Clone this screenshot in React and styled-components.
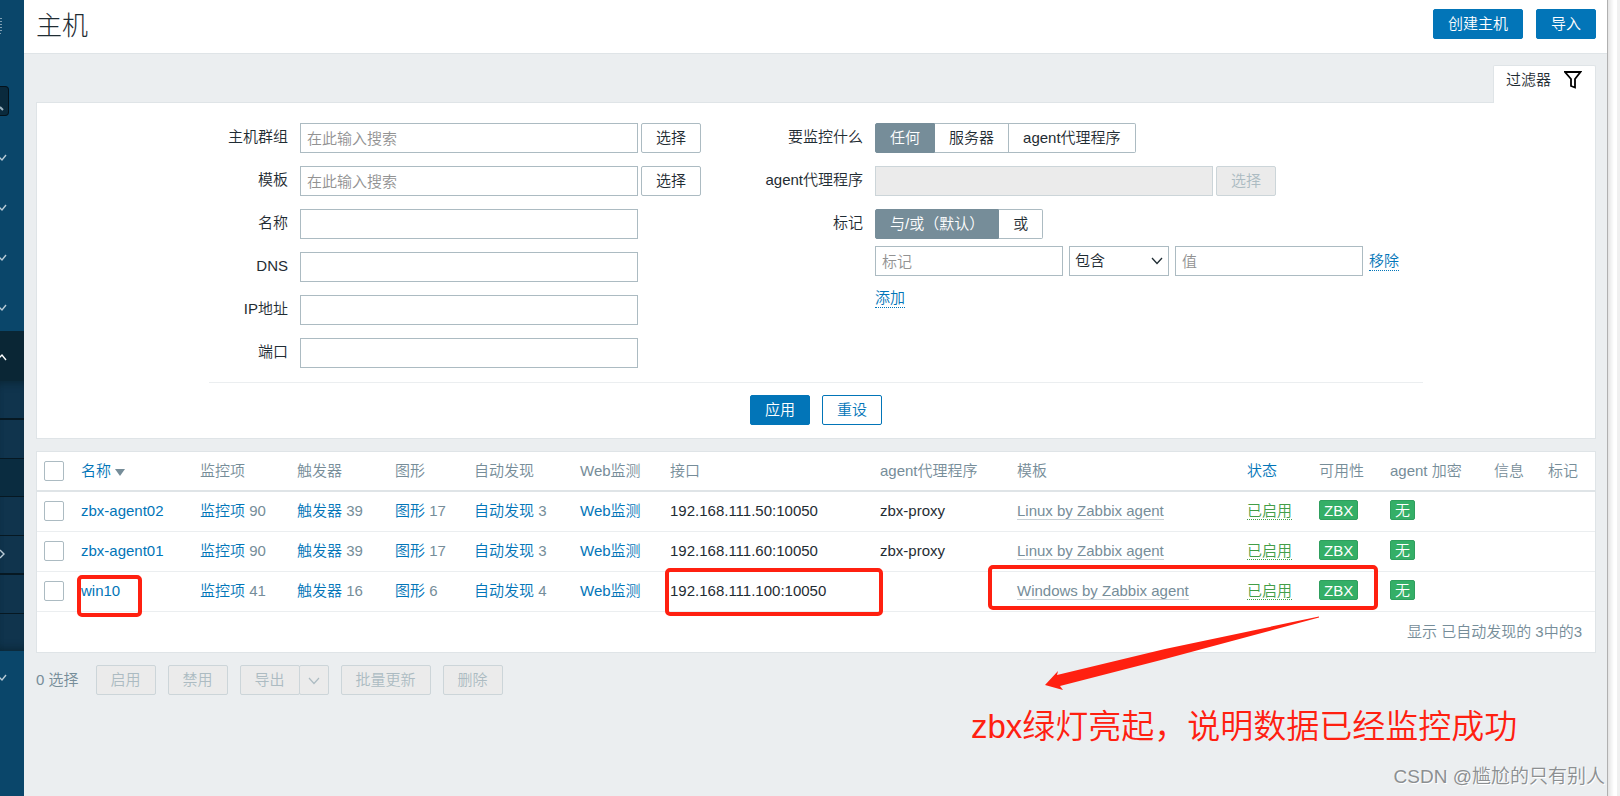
import styled, { createGlobalStyle } from "styled-components";

const GlobalStyle = createGlobalStyle`
  * {
    box-sizing: border-box;
  }
  body {
    margin: 0;
    background: #ebeef0;
    color: #1f2c33;
    font-family: "Liberation Sans", "Noto Sans CJK SC", sans-serif;
    font-size: 15px;
    font-weight: 350;
    line-height: 20px;
  }
  input, select, button {
    font: inherit;
    color: inherit;
    margin: 0;
  }
  a {
    color: #0275b8;
    text-decoration: none;
  }
`;

const hosts = [
  { name: "zbx-agent02", items: 90, triggers: 39, graphs: 17, discovery: 3, iface: "192.168.111.50:10050", proxy: "zbx-proxy", template: "Linux by Zabbix agent" },
  { name: "zbx-agent01", items: 90, triggers: 39, graphs: 17, discovery: 3, iface: "192.168.111.60:10050", proxy: "zbx-proxy", template: "Linux by Zabbix agent" },
  { name: "win10", items: 41, triggers: 16, graphs: 6, discovery: 4, iface: "192.168.111.100:10050", proxy: "", template: "Windows by Zabbix agent" },
];

const columns = [37, 119, 97, 98, 79, 106, 90, 210, 137, 230, 72, 71, 104, 54, 54];

const Chevron = ({ dir = "down" }) => {
  const paths = {
    down: "M-3 5 L2 10 L6 5",
    up: "M-3 10 L2 5 L6 10",
    right: "M0 2 L4 6 L0 10",
  };
  return (
    <svg width="8" height="12" viewBox="0 0 8 12" fill="none" stroke="currentColor" strokeWidth="1.4">
      <path d={paths[dir]} />
    </svg>
  );
};

const Radios = ({ name, label, options }) => (
  <RadioList role="radiogroup" aria-label={label}>
    {options.map((text, i) => (
      <label key={text}>
        <input type="radio" name={name} defaultChecked={i === 0} />
        <span>{text}</span>
      </label>
    ))}
  </RadioList>
);

const App = () => {
  return (
    <Page>
      <GlobalStyle />
      <Sidebar aria-label="menu">
        <SideTop>
          <svg width="3" height="16" viewBox="0 0 3 16" fill="none" stroke="#7f9fb3" strokeWidth="1">
            <path d="M0 .5H2M0 3.5H2M0 6.5H2M0 9.5H2M0 12.5H2M0 15.5H1" />
          </svg>
        </SideTop>
        <SideSearch>
          <svg width="4" height="5" viewBox="0 0 4 5" stroke="#9fb5c2" strokeWidth="2">
            <path d="M0 1 L3 4" />
          </svg>
        </SideSearch>
        <SideItem><Chevron /></SideItem>
        <SideItem><Chevron /></SideItem>
        <SideItem><Chevron /></SideItem>
        <SideItem><Chevron /></SideItem>
        <SideItem $open><Chevron dir="up" /></SideItem>
        <SubMenu>
          <SubItem $thick />
          <SubItem />
          <SubItem $active />
          <SubItem />
          <SubItem $thick><Chevron dir="right" /></SubItem>
          <SubItem />
          <SubItem $last />
        </SubMenu>
        <SideItem><Chevron /></SideItem>
      </Sidebar>

      <Main>
        <Header>
          <h1>主机</h1>
          <Button $primary type="button">创建主机</Button>
          <Button $primary type="button">导入</Button>
        </Header>

        <Content>
          <FilterTab type="button">
            过滤器
            <svg width="18" height="18" viewBox="0 0 18 18" fill="none" stroke="#000" strokeWidth="1.8">
              <path d="M1 1H16.5L11 8V16.5L7 15V8Z" />
            </svg>
          </FilterTab>

          <Filter>
            <FilterForm>
              <Column>
                <Row>
                  <Label htmlFor="groups" $width={79}>主机群组</Label>
                  <Input id="groups" placeholder="在此输入搜索" />
                  <Button type="button">选择</Button>
                </Row>
                <Row>
                  <Label htmlFor="templates" $width={79}>模板</Label>
                  <Input id="templates" placeholder="在此输入搜索" />
                  <Button type="button">选择</Button>
                </Row>
                <Row>
                  <Label htmlFor="name" $width={79}>名称</Label>
                  <Input id="name" />
                </Row>
                <Row>
                  <Label htmlFor="dns" $width={79}>DNS</Label>
                  <Input id="dns" />
                </Row>
                <Row>
                  <Label htmlFor="ip" $width={79}>IP地址</Label>
                  <Input id="ip" />
                </Row>
                <Row>
                  <Label htmlFor="port" $width={79}>端口</Label>
                  <Input id="port" />
                </Row>
              </Column>

              <Column>
                <Row>
                  <Label as="span" $width={100}>要监控什么</Label>
                  <Radios name="monitored" label="要监控什么" options={["任何", "服务器", "agent代理程序"]} />
                </Row>
                <Row>
                  <Label htmlFor="proxy" $width={100}>agent代理程序</Label>
                  <Input id="proxy" disabled />
                  <Button type="button" disabled>选择</Button>
                </Row>
                <Row>
                  <Label as="span" $width={100}>标记</Label>
                  <TagFields>
                    <Radios name="evaltype" label="标记" options={["与/或（默认）", "或"]} />
                    <TagRow>
                      <Input $width={188} placeholder="标记" aria-label="标记" />
                      <SelectBox>
                        <select aria-label="运算符">
                          <option>包含</option>
                        </select>
                        <svg width="12" height="8" viewBox="0 0 12 8" fill="none" stroke="#1f2c33" strokeWidth="1.3">
                          <path d="M1 1 L6 6.500 L11 1" />
                        </svg>
                      </SelectBox>
                      <Input $width={188} placeholder="值" aria-label="值" />
                      <DottedLink href="#remove">移除</DottedLink>
                    </TagRow>
                    <TagRow>
                      <DottedLink href="#add">添加</DottedLink>
                    </TagRow>
                  </TagFields>
                </Row>
              </Column>
            </FilterForm>
            <FilterFooter>
              <Button $primary type="button">应用</Button>
              <Button $outline type="button">重设</Button>
            </FilterFooter>
          </Filter>

          <TableBox>
            <Table>
              <colgroup>
                {columns.map((w, i) => (
                  <col key={i} width={w} />
                ))}
              </colgroup>
              <thead>
                <tr>
                  <th><Checkbox aria-label="全选" /></th>
                  <th><a href="#name">名称<SortArrow /></a></th>
                  <th>监控项</th>
                  <th>触发器</th>
                  <th>图形</th>
                  <th>自动发现</th>
                  <th>Web监测</th>
                  <th>接口</th>
                  <th>agent代理程序</th>
                  <th>模板</th>
                  <th><a href="#status">状态</a></th>
                  <th>可用性</th>
                  <th>agent 加密</th>
                  <th>信息</th>
                  <th>标记</th>
                </tr>
              </thead>
              <tbody>
                {hosts.map((h) => (
                  <tr key={h.name}>
                    <td><Checkbox aria-label={h.name} /></td>
                    <td><a href="#host">{h.name}</a></td>
                    <td><a href="#items">监控项</a> <Count>{h.items}</Count></td>
                    <td><a href="#triggers">触发器</a> <Count>{h.triggers}</Count></td>
                    <td><a href="#graphs">图形</a> <Count>{h.graphs}</Count></td>
                    <td><a href="#discovery">自动发现</a> <Count>{h.discovery}</Count></td>
                    <td><a href="#web">Web监测</a></td>
                    <td>{h.iface}</td>
                    <td>{h.proxy}</td>
                    <td><TemplateLink href="#template">{h.template}</TemplateLink></td>
                    <td><DottedLink $green href="#disable">已启用</DottedLink></td>
                    <td><Badge>ZBX</Badge></td>
                    <td><Badge>无</Badge></td>
                    <td />
                    <td />
                  </tr>
                ))}
              </tbody>
            </Table>
            <TableFooter>显示 已自动发现的 3中的3</TableFooter>
          </TableBox>

          <Actions>
            <span>0 选择</span>
            <Button type="button" disabled>启用</Button>
            <Button type="button" disabled>禁用</Button>
            <Split>
              <Button type="button" disabled>导出</Button>
              <Button type="button" disabled $arrow aria-label="导出格式">
                <svg width="12" height="8" viewBox="0 0 12 8" fill="none" stroke="currentColor" strokeWidth="1.2">
                  <path d="M1 1 L6 6.500 L11 1" />
                </svg>
              </Button>
            </Split>
            <Button type="button" disabled>批量更新</Button>
            <Button type="button" disabled>删除</Button>
          </Actions>
        </Content>
      </Main>
      <Edge />

      {/* notes drawn over the page */}
      <Mark $x={77} $y={575} $w={65} $h={42} />
      <Mark $x={665} $y={568} $w={218} $h={48} />
      <Mark $x={988} $y={565} $w={390} $h={45} />
      <Arrow width="280" height="76" viewBox="0 0 280 76">
        <path d="M274 1.500 L120 34 L12 60 L13 56 L0 70 L18 75 L15 71 L120 44 L274 2.500 Z" fill="#ff2010" />
      </Arrow>
      <Note>zbx绿灯亮起，说明数据已经监控成功</Note>
      <Watermark>CSDN @尴尬的只有别人</Watermark>
    </Page>
  );
};

const Page = styled.div`
  position: relative;
  display: flex;
  min-height: 100vh;
`;

const Sidebar = styled.nav`
  flex: none;
  width: 24px;
  background: #0a466a;
  color: #b9cbd6;
  svg {
    display: block;
  }
`;

const SideTop = styled.div`
  height: 86px;
  padding-top: 18px;
`;

const SideSearch = styled.div`
  width: 9px;
  height: 30px;
  margin-bottom: 15px;
  padding-top: 19px;
  background: #0a2a3d;
  border: 1px solid #04121b;
  border-left: 0;
  border-radius: 0 4px 4px 0;
`;

const SideItem = styled.div`
  display: flex;
  align-items: center;
  height: 50px;
  background: ${(p) => (p.$open ? "#0a2635" : "transparent")};
  color: ${(p) => (p.$open ? "#fff" : "inherit")};
`;

const SubMenu = styled.div`
  display: flex;
  flex-direction: column;
  height: 270px;
  background: #10344d;
  box-shadow: inset 0 8px 8px -6px #0a2635, inset 0 -8px 8px -6px #0a2635;
`;

const SubItem = styled.div`
  flex: 1;
  display: flex;
  align-items: center;
  background: ${(p) => (p.$active ? "#0a2c40" : "transparent")};
  border-bottom: ${(p) => (p.$last ? 0 : p.$thick ? 2 : 1)}px solid #061822;
`;

const Main = styled.main`
  flex: 1;
  min-width: 0;
`;

const Header = styled.header`
  display: flex;
  align-items: flex-start;
  gap: 13px;
  height: 54px;
  padding: 9px 11px 0 12px;
  background: #fff;
  border-bottom: 1px solid #dfe4e7;
  h1 {
    flex: 1;
    margin: 0;
    font-size: 26px;
    font-weight: 300;
    line-height: 34px;
  }
`;

const Content = styled.div`
  display: flex;
  flex-direction: column;
  padding: 11px 11px 0 12px;
`;

const Button = styled.button`
  flex: none;
  height: 30px;
  padding: 0 ${(p) => (p.$arrow ? 8 : 14)}px;
  line-height: 20px;
  white-space: nowrap;
  border: 1px solid ${(p) => (p.$primary || p.$outline ? "#0275b8" : "#acbbc2")};
  border-radius: 2px;
  background: ${(p) => (p.$primary ? "#0275b8" : "#fff")};
  color: ${(p) => (p.$primary ? "#fff" : p.$outline ? "#0275b8" : "#1f2c33")};
  &:disabled {
    background: #ebebeb;
    border-color: #ccd5d9;
    color: #acbbc2;
  }
`;

const FilterTab = styled.button`
  align-self: flex-end;
  display: flex;
  align-items: center;
  gap: 13px;
  height: 38px;
  margin-bottom: -1px;
  padding: 0 13px 9px 12px;
  background: #fff;
  border: 1px solid #dfe4e7;
  border-bottom: 0;
  border-radius: 2px 2px 0 0;
  z-index: 1;
`;

const Filter = styled.section`
  padding: 20px 0 13px;
  background: #fff;
  border: 1px solid #dfe4e7;
`;

const FilterForm = styled.form`
  display: flex;
  gap: 62px;
  max-width: 1214px;
  margin: 0 auto;
`;

const Column = styled.div`
  display: flex;
  flex-direction: column;
  gap: 13px;
`;

const Row = styled.div`
  display: flex;
  align-items: flex-start;
  gap: 3px;
  min-height: 30px;
`;

const Label = styled.label`
  flex: none;
  width: ${(p) => p.$width}px;
  margin-right: 9px;
  line-height: 28px;
  text-align: right;
  white-space: nowrap;
`;

const Input = styled.input`
  width: ${(p) => p.$width || 338}px;
  height: 30px;
  padding: 0 6px;
  border: 1px solid #acbbc2;
  border-radius: 0;
  background: #fff;
  outline: 0;
  &::placeholder {
    color: #929292;
    opacity: 1;
  }
  &:disabled {
    background: #ebebeb;
    border-color: #ccd5d9;
  }
`;

const RadioList = styled.div`
  display: flex;
  input {
    position: absolute;
    opacity: 0;
  }
  span {
    display: block;
    height: 30px;
    padding: 0 14px;
    line-height: 28px;
    border: 1px solid #acbbc2;
    border-left-width: 0;
  }
  label:first-child span {
    border-left-width: 1px;
    border-radius: 2px 0 0 2px;
  }
  label:last-child span {
    border-radius: 0 2px 2px 0;
  }
  input:checked + span {
    background: #768d99;
    border-color: #768d99;
    color: #fff;
  }
`;

const TagFields = styled.div`
  display: flex;
  flex-direction: column;
  gap: 7px;
`;

const TagRow = styled.div`
  display: flex;
  align-items: center;
  gap: 6px;
  height: 30px;
`;

const SelectBox = styled.div`
  display: flex;
  align-items: center;
  width: 100px;
  height: 30px;
  padding-right: 5px;
  border: 1px solid #acbbc2;
  select {
    flex: 1;
    min-width: 0;
    height: 28px;
    padding: 0 5px;
    border: 0;
    background: transparent;
    appearance: none;
    outline: 0;
  }
`;

const DottedLink = styled.a`
  line-height: 18px;
  color: ${(p) => (p.$green ? "#429e47" : "#0275b8")};
  border-bottom: 1px dotted;
`;

const FilterFooter = styled.div`
  display: flex;
  justify-content: center;
  gap: 12px;
  max-width: 1214px;
  margin: 14px auto 0;
  padding-top: 12px;
  border-top: 1px solid #ebeef0;
`;

const TableBox = styled.section`
  margin-top: 12px;
  background: #fff;
  border: 1px solid #dfe4e7;
`;

const Table = styled.table`
  width: 100%;
  table-layout: fixed;
  border-collapse: separate;
  border-spacing: 0;
  th, td {
    height: 40px;
    padding: 0 0 2px 7px;
    text-align: left;
    white-space: nowrap;
    border-bottom: 1px solid #ebeef0;
  }
  th {
    padding-bottom: 0;
    font-weight: inherit;
    color: #768d99;
    border-bottom: 2px solid #dfe4e7;
  }
`;

const Checkbox = styled.input.attrs({ type: "checkbox" })`
  display: block;
  width: 20px;
  height: 20px;
  appearance: none;
  background: #fff;
  border: 1px solid #acbbc2;
  border-radius: 2px;
`;

const SortArrow = styled.span`
  display: inline-block;
  margin-left: 4px;
  border: 5px solid transparent;
  border-top: 7px solid #768d99;
  border-bottom: 0;
`;

const Count = styled.span`
  color: #768d99;
`;

const TemplateLink = styled.a`
  line-height: 18px;
  color: #768d99;
  border-bottom: 1px solid #c8d1d6;
`;

const Badge = styled.span`
  display: inline-block;
  height: 20px;
  padding: 0 4px;
  line-height: 19px;
  color: #fff;
  background: #34af67;
  border: 1px solid #2f9f5e;
  border-radius: 2px;
`;

const TableFooter = styled.div`
  padding: 10px 13px;
  text-align: right;
  color: #768d99;
`;

const Actions = styled.div`
  display: flex;
  align-items: center;
  gap: 12px;
  margin-top: 12px;
  color: #768d99;
  > span {
    margin-right: 5px;
  }
`;

const Split = styled.div`
  display: flex;
  button + button {
    margin-left: -1px;
  }
`;

const Edge = styled.div`
  flex: none;
  width: 13px;
  background: linear-gradient(to right, #b0b0b0 1px, #e4e4e4 1px, #fff 7px, #fff 10px, #f0f0f0 10px);
`;

const Mark = styled.div`
  position: absolute;
  left: ${(p) => p.$x}px;
  top: ${(p) => p.$y}px;
  width: ${(p) => p.$w}px;
  height: ${(p) => p.$h}px;
  border: 4px solid #ff2010;
  border-radius: 5px;
  pointer-events: none;
`;

const Arrow = styled.svg`
  position: absolute;
  left: 1045px;
  top: 615px;
  pointer-events: none;
`;

const Note = styled.div`
  position: absolute;
  left: 971px;
  top: 707px;
  font-size: 33px;
  line-height: 40px;
  color: #ff2010;
  white-space: nowrap;
`;

const Watermark = styled.div`
  position: absolute;
  right: 15px;
  bottom: 5px;
  font-size: 19px;
  line-height: 28px;
  color: #8c8f91;
  text-shadow: 1px 1px 0 #fff;
  white-space: nowrap;
`;

export default App;
